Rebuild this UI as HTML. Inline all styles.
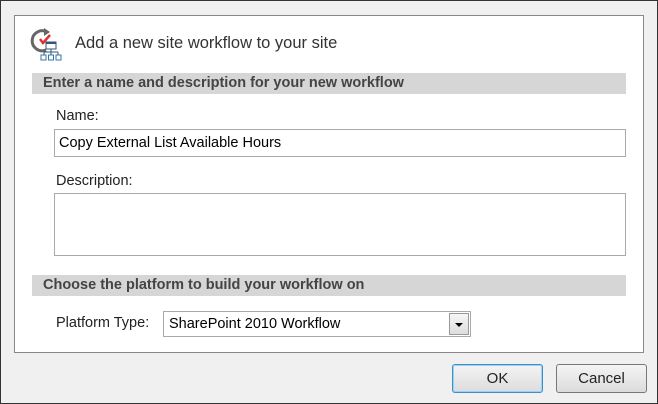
<!DOCTYPE html>
<html><head><style>
body{margin:0;width:658px;height:404px;background:#f0f0f0;font-family:"Liberation Sans",sans-serif;position:relative;overflow:hidden}
.o{position:absolute;left:0;top:0;width:656px;height:402px;border:1px solid #333}
.p{position:absolute;left:14px;top:15px;width:628px;height:336px;background:#fff;border:1px solid #888}
.a{position:absolute}
.bar{position:absolute;left:32px;width:594px;height:21px;background:#d6d6d6;font-weight:bold;font-size:14.5px;color:#444;line-height:21px;padding-left:11px;box-sizing:border-box}
.lbl{position:absolute;font-size:14.5px;color:#222}
.in{position:absolute;border:1px solid #aaa;background:#fff;box-sizing:border-box}
.btn{position:absolute;top:364px;width:91px;height:29px;border:1px solid #777;border-radius:3px;background:linear-gradient(#f4f4f4,#dcdcdc);box-sizing:border-box;text-align:center;line-height:27px;font-size:15px;color:#222}
</style></head><body>
<div class="o"></div>
<div class="p"></div>
<svg class="a" style="left:30px;top:26px" width="40" height="38" viewBox="0 0 40 38">
<path d="M17 6 A10 10 0 1 0 16 24" fill="none" stroke="#666" stroke-width="3"/>
<path d="M14 2 L20 6 L14 10Z" fill="#666"/>
<path d="M10 13 L13 17 L20 9" fill="none" stroke="#d33" stroke-width="2.5"/>
<rect x="16" y="16" width="10" height="7" fill="#fff" stroke="#357" stroke-width="1"/>
<rect x="16" y="16" width="10" height="2" fill="#357"/>
<path d="M21 23v3M14 26h14M14 26v3M21 26v3M28 26v3" stroke="#357" fill="none"/>
<rect x="11" y="29" width="5" height="5" fill="#fff" stroke="#37a"/><rect x="18.5" y="29" width="5" height="5" fill="#fff" stroke="#37a"/><rect x="26" y="29" width="5" height="5" fill="#fff" stroke="#37a"/>
</svg>
<div class="lbl" style="left:75px;top:34px;font-size:16.5px;color:#333">Add a new site workflow to your site</div>
<div class="bar" style="top:73px">Enter a name and description for your new workflow</div>
<div class="lbl" style="left:56px;top:108px">Name:</div>
<div class="in" style="left:54px;top:129px;width:572px;height:28px;font-size:14.5px;line-height:26px;padding-left:4px">Copy External List Available Hours</div>
<div class="lbl" style="left:56px;top:173px">Description:</div>
<div class="in" style="left:54px;top:193px;width:572px;height:63px"></div>
<div class="bar" style="top:275px">Choose the platform to build your workflow on</div>
<div class="lbl" style="left:56px;top:315px">Platform Type:</div>
<div class="in" style="left:163px;top:311px;width:308px;height:26px;font-size:14.5px;line-height:24px;padding-left:5px">SharePoint 2010 Workflow
<div style="position:absolute;right:1px;top:1px;width:20px;height:22px;border:1px solid #999;box-sizing:border-box;background:linear-gradient(#f6f6f6,#ddd)"><div style="position:absolute;left:5px;top:9px;border-left:4px solid transparent;border-right:4px solid transparent;border-top:4px solid #000"></div></div></div>
<div class="btn" style="left:452px;border-color:#3c8fc9;box-shadow:inset 0 0 0 1px #9cd3f5">OK</div>
<div class="btn" style="left:556px">Cancel</div>
</body></html>
